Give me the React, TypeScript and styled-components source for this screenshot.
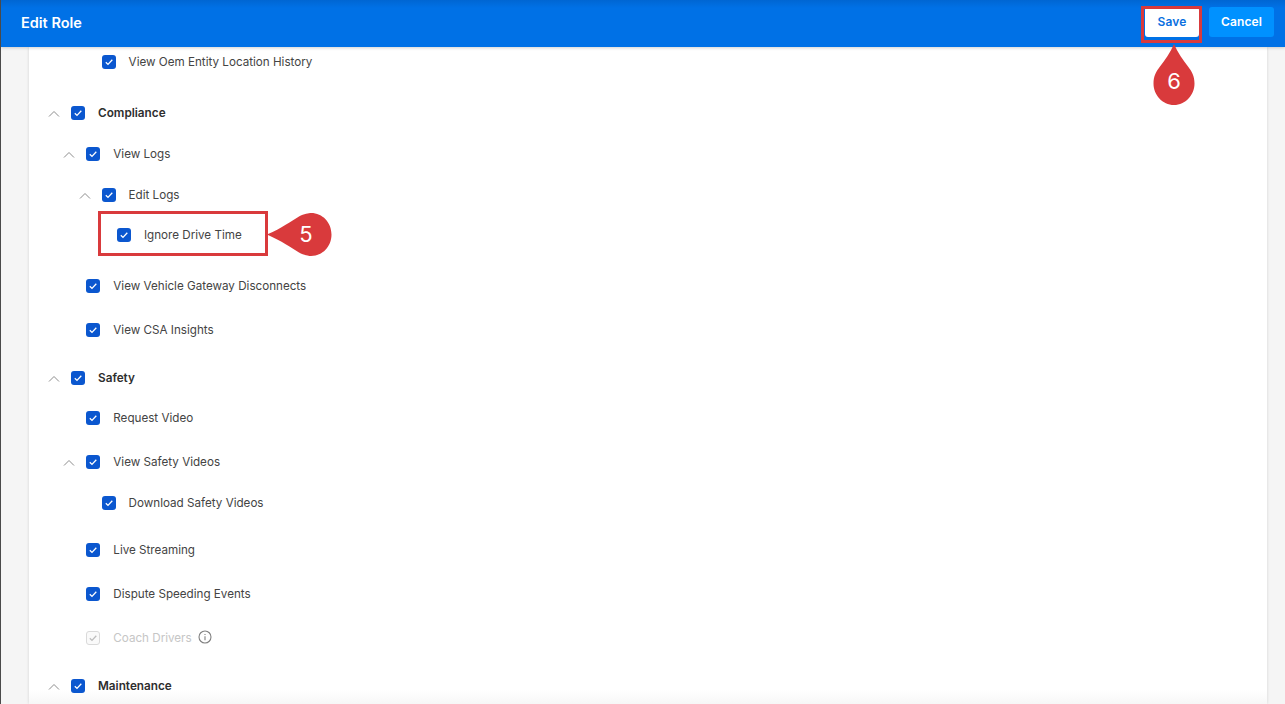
import React from "react";
import styled, { createGlobalStyle } from "styled-components";

const Global = createGlobalStyle`
  html, body { margin: 0; padding: 0; height: 100%; overflow: hidden; background: #f5f5f5; }
  body { font-family: Inter, "Liberation Sans", sans-serif; -webkit-font-smoothing: antialiased; }
`;

const Page = styled.div`
  position: relative;
  width: 1285px;
  height: 704px;
  overflow: hidden;
  display: flex;
  flex-direction: column;
  box-sizing: border-box;
  border-left: 1px solid #4a4a4a;
`;

const Header = styled.header`
  flex: none;
  height: 47px;
  box-sizing: border-box;
  display: flex;
  align-items: center;
  justify-content: space-between;
  padding: 0 11px 3px 20px;
  background: linear-gradient(#0066d2 0, #0071e6 8px, #0071e6 100%);
  box-shadow: 0 1px 3px rgba(0, 0, 0, 0.18);
  position: relative;
  z-index: 2;
`;

const Title = styled.h1`
  margin: 0;
  font-size: 14.5px;
  font-weight: 600;
  color: #fff;
`;

const Actions = styled.div`
  display: flex;
  align-items: center;
  gap: 10px;
`;

const Button = styled.button<{ $primary?: boolean }>`
  height: 30px;
  border: 0;
  border-radius: 3px;
  font: 600 12px Inter, "Liberation Sans", sans-serif;
  letter-spacing: 0.1px;
  padding: 0 0 2px;
  width: ${(p) => (p.$primary ? "54px" : "65px")};
  background: ${(p) => (p.$primary ? "#fff" : "#0091ff")};
  color: ${(p) => (p.$primary ? "#0a6fe0" : "#fff")};
`;

const Body = styled.main`
  flex: 1;
  min-height: 0;
  display: flex;
  padding: 0 18px 0 28px;
`;

const Panel = styled.section`
  flex: 1;
  background: linear-gradient(#fff calc(100% - 14px), #f7f7f7 100%);
  box-shadow: 0 0 3px rgba(0, 0, 0, 0.14);
  padding: 4px 0 0 42px;
  overflow: hidden;
`;

const Row = styled.div<{ $top: number; $level: number }>`
  position: relative;
  display: flex;
  align-items: center;
  height: 20px;
  margin-top: ${(p) => p.$top}px;
  margin-left: ${(p) => p.$level * 15.3}px;
`;

const Chevron = styled.svg`
  position: absolute;
  left: -24px;
  top: 7px;
  width: 14px;
  height: 10px;
  fill: none;
  stroke: #8d8d8d;
  stroke-width: 1;
`;

const Box = styled.span<{ $disabled?: boolean }>`
  flex: none;
  display: flex;
  align-items: center;
  justify-content: center;
  box-sizing: border-box;
  width: 14px;
  height: 14px;
  margin-top: 2px;
  border-radius: 3px;
  background: ${(p) => (p.$disabled ? "#fafafa" : "#0b57cf")};
  border: ${(p) => (p.$disabled ? "1px solid #dadada" : "0")};
`;

const Tick = styled.svg<{ $disabled?: boolean }>`
  width: 10px;
  height: 10px;
  fill: none;
  stroke: ${(p) => (p.$disabled ? "#bdbdbd" : "#fff")};
  stroke-width: 1.3;
`;

const Label = styled.span<{ $bold?: boolean; $disabled?: boolean }>`
  margin-left: 13px;
  padding-top: ${(p) => (p.$bold ? "1px" : "2px")};
  font-size: ${(p) => (p.$bold ? "11.75px" : "11.65px")};
  white-space: nowrap;
  font-weight: ${(p) => (p.$bold ? 600 : 400)};
  color: ${(p) => (p.$disabled ? "#c6c6c6" : p.$bold ? "#2e2e2e" : "#444")};
`;

const Info = styled.svg`
  margin-left: 6px;
  width: 14px;
  height: 14px;
  fill: none;
  stroke: #808080;
  stroke-width: 1.1;
`;

const Highlight = styled.div<{ $x: number; $y: number; $w: number; $h: number }>`
  position: absolute;
  left: ${(p) => p.$x}px;
  top: ${(p) => p.$y}px;
  width: ${(p) => p.$w}px;
  height: ${(p) => p.$h}px;
  box-sizing: border-box;
  border: 3px solid #d93a3c;
  z-index: 3;
`;

const Callout = styled.div<{ $x: number; $y: number; $w: number; $h: number }>`
  position: absolute;
  left: ${(p) => p.$x}px;
  top: ${(p) => p.$y}px;
  width: ${(p) => p.$w}px;
  height: ${(p) => p.$h}px;
  z-index: 3;
  svg { position: absolute; inset: 0; width: 100%; height: 100%; fill: #d93a3c; }
`;

const CalloutNum = styled.span<{ $x: number; $y: number }>`
  position: absolute;
  left: ${(p) => p.$x}px;
  top: ${(p) => p.$y}px;
  transform: translate(-50%, -50%);
  color: #fff;
  font-size: 22px;
  line-height: 1;
`;

type Item = {
  label: string;
  top: number;
  level: number;
  chevron?: boolean;
  bold?: boolean;
  disabled?: boolean;
  info?: boolean;
};

const items: Item[] = [
  { label: "View Oem Entity Location History", top: 0, level: 2 },
  { label: "Compliance", top: 31, level: 0, chevron: true, bold: true },
  { label: "View Logs", top: 21, level: 1, chevron: true },
  { label: "Edit Logs", top: 21, level: 2, chevron: true },
  { label: "Ignore Drive Time", top: 20, level: 3 },
  { label: "View Vehicle Gateway Disconnects", top: 31, level: 1 },
  { label: "View CSA Insights", top: 24, level: 1 },
  { label: "Safety", top: 28, level: 0, chevron: true, bold: true },
  { label: "Request Video", top: 20, level: 1 },
  { label: "View Safety Videos", top: 24, level: 1, chevron: true },
  { label: "Download Safety Videos", top: 21, level: 2 },
  { label: "Live Streaming", top: 27, level: 1 },
  { label: "Dispute Speeding Events", top: 24, level: 1 },
  { label: "Coach Drivers", top: 24, level: 1, disabled: true, info: true },
  { label: "Maintenance", top: 28, level: 0, chevron: true, bold: true },
];

export default function App() {
  return (
    <Page>
      <Global />
      <Header>
        <Title>Edit Role</Title>
        <Actions>
          <Button $primary>Save</Button>
          <Button>Cancel</Button>
        </Actions>
      </Header>
      <Body>
        <Panel>
          {items.map((it) => (
            <Row key={it.label} $top={it.top} $level={it.level}>
              {it.chevron && (
                <Chevron viewBox="0 0 14 10">
                  <path d="M2 7.500 7 2.500l5 5" />
                </Chevron>
              )}
              <Box $disabled={it.disabled}>
                <Tick $disabled={it.disabled} viewBox="0 0 10 10">
                  <path d="M1.800 5.200 4 7.400 8.300 2.800" />
                </Tick>
              </Box>
              <Label $bold={it.bold} $disabled={it.disabled}>
                {it.label}
              </Label>
              {it.info && (
                <Info viewBox="0 0 14 14">
                  <circle cx="7" cy="7" r="6" />
                  <path d="M7 6.200v4M7 4v1" />
                </Info>
              )}
            </Row>
          ))}
        </Panel>
      </Body>

      <Highlight $x={97} $y={211} $w={170} $h={45} />
      <Callout $x={267} $y={213} $w={64} $h={43}>
        <svg viewBox="0 0 64 43">
          <path d="M-1 21.500C12 16 24 8 31 3.500 36 .8 41 0 43 0c11.500 0 20.500 9.500 20.500 21.500S54.500 43 43 43c-2 0-7-.8-12-3.500C24 35 12 27-1 21.500Z" />
        </svg>
        <CalloutNum $x={38} $y={21}>5</CalloutNum>
      </Callout>

      <Highlight $x={1140} $y={6} $w={61} $h={37} />
      <Callout $x={1152} $y={43} $w={42} $h={63}>
        <svg viewBox="0 0 42 63">
          <path d="M21 1c4 9 9 16 14 22.500 4 5 6.500 10 6.500 17C41.500 52 32.500 62 21 62S.5 52 .5 40.500c0-7 2.500-12 6.500-17C12 17 17 10 21 1Z" />
        </svg>
        <CalloutNum $x={21} $y={38}>6</CalloutNum>
      </Callout>
    </Page>
  );
}
